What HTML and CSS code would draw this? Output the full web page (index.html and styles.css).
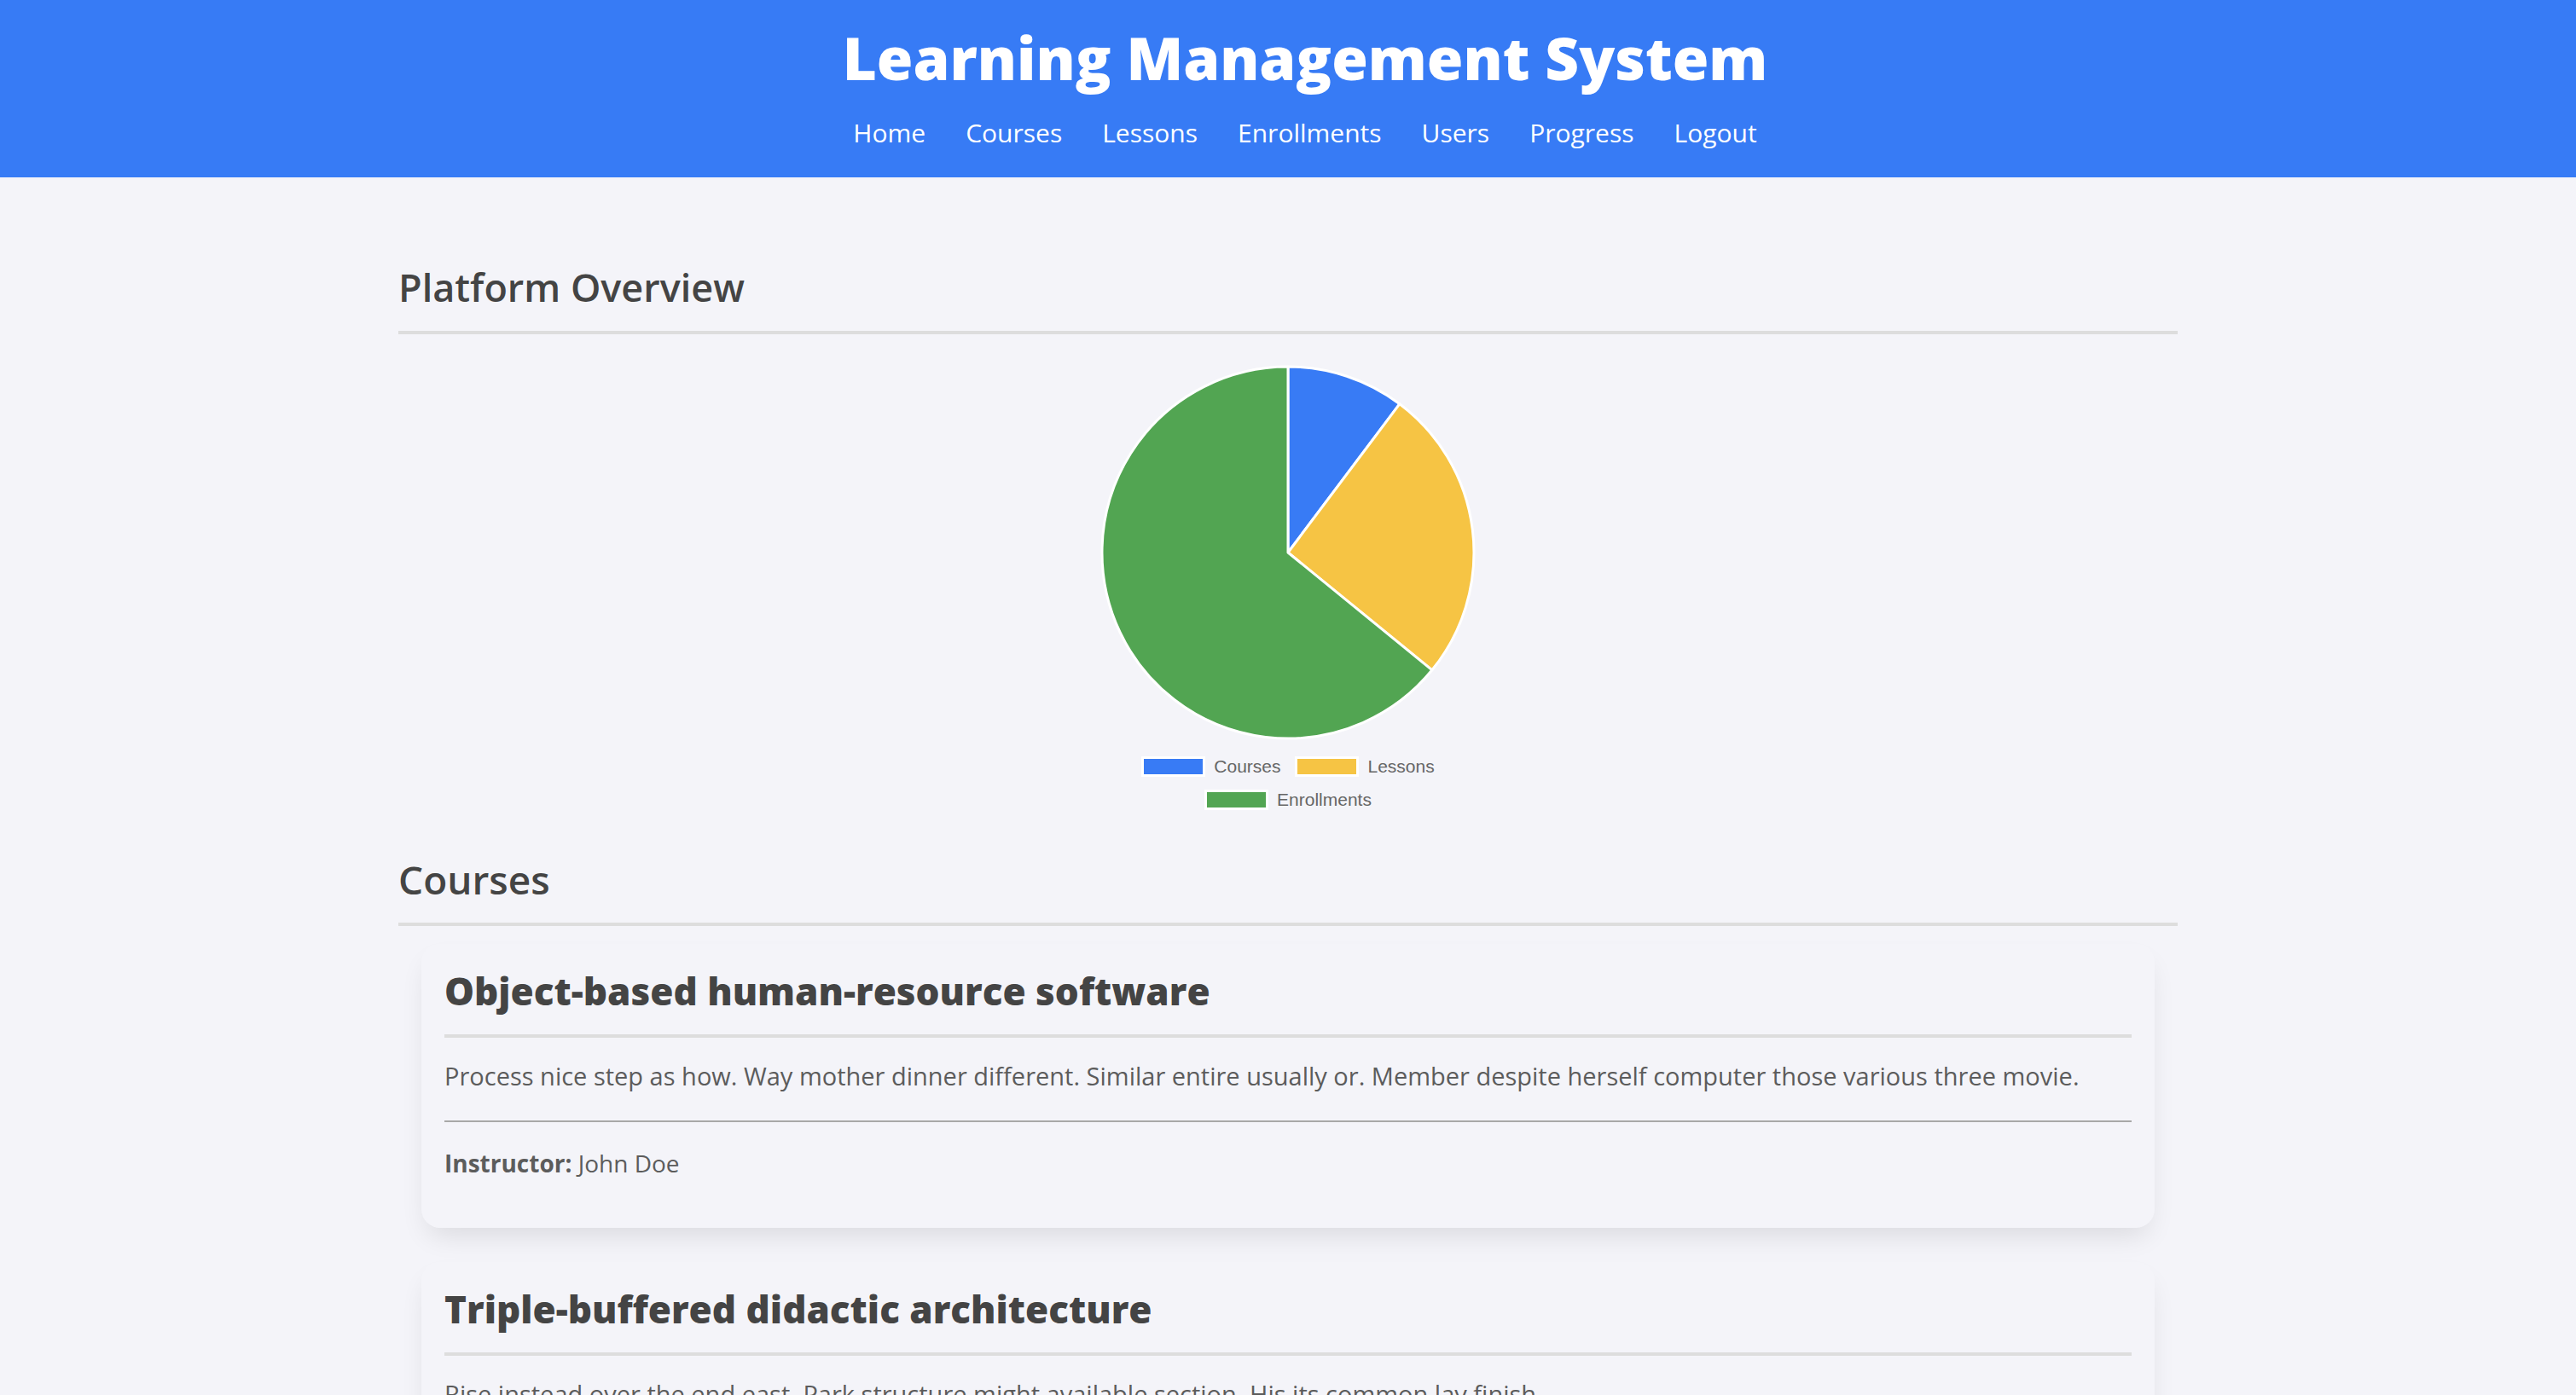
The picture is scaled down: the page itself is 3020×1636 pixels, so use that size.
FILE: index.html
```html
<!DOCTYPE html>
<html lang="en">
<head>
<meta charset="utf-8">
<title>Learning Management System</title>
<link rel="stylesheet" href="styles.css">
</head>
<body>
<header class="site-header">
  <h1 class="site-title">Learning Management System</h1>
  <nav class="site-nav">
    <a href="#">Home</a>
    <a href="#">Courses</a>
    <a href="#">Lessons</a>
    <a href="#">Enrollments</a>
    <a href="#">Users</a>
    <a href="#">Progress</a>
    <a href="#">Logout</a>
  </nav>
</header>
<main class="container">
  <section class="overview">
    <h2 class="section-title">Platform Overview</h2>
    <div class="chart">
      <svg class="pie" width="440" height="440" viewBox="0 0 440 440">
        <path d="M220,220 L220,2 A218,218 0 0 1 350.9,45.7 Z" fill="#387bf5" stroke="#fff" stroke-width="3" stroke-linejoin="round"/>
        <path d="M220,220 L350.9,45.7 A218,218 0 0 1 388.9,357.8 Z" fill="#f6c444" stroke="#fff" stroke-width="3" stroke-linejoin="round"/>
        <path d="M220,220 L388.9,357.8 A218,218 0 1 1 220,2 Z" fill="#52a552" stroke="#fff" stroke-width="3" stroke-linejoin="round"/>
      </svg>
      <div class="legend">
        <div class="legend-row">
          <span class="legend-item"><span class="swatch swatch-blue"></span>Courses</span>
          <span class="legend-item"><span class="swatch swatch-yellow"></span>Lessons</span>
        </div>
        <div class="legend-row">
          <span class="legend-item"><span class="swatch swatch-green"></span>Enrollments</span>
        </div>
      </div>
    </div>
  </section>
  <section class="courses">
    <h2 class="section-title">Courses</h2>
    <div class="course-list">
      <article class="course-card">
        <h3 class="course-title">Object-based human-resource software</h3>
        <p class="course-desc">Process nice step as how. Way mother dinner different. Similar entire usually or. Member despite herself computer those various three movie.</p>
        <p class="course-meta"><strong>Instructor:</strong> John Doe</p>
      </article>
      <article class="course-card">
        <h3 class="course-title">Triple-buffered didactic architecture</h3>
        <p class="course-desc">Rise instead over the end east. Park structure might available section. His its common lay finish.</p>
        <p class="course-meta"><strong>Instructor:</strong> Jane Smith</p>
      </article>
    </div>
  </section>
</main>
</body>
</html>
```
FILE: styles.css
```css
html, body {
  margin: 0;
  padding: 0;
}
body {
  background: #f4f4f9;
  font-family: "Open Sans", "Noto Sans", sans-serif;
  color: #444;
}
.site-header {
  background: #377bf5;
  color: #fff;
  text-align: center;
  padding: 24px 0 32px 40px;
}
.site-title {
  margin: 0;
  font-size: 69px;
  line-height: 86px;
  font-weight: 800;
}
.site-nav {
  margin-top: 26px;
  display: flex;
  justify-content: center;
  gap: 47px;
  font-size: 30px;
  line-height: 40px;
  font-weight: 500;
}
.site-nav a {
  color: #fff;
  text-decoration: none;
}
.container {
  width: 2086px;
  margin: 0 auto;
  padding-top: 103px;
}
.section-title {
  margin: 0;
  font-size: 45px;
  line-height: 52px;
  font-weight: 600;
  color: #444;
  padding-bottom: 25px;
  border-bottom: 4px solid #dddddd;
}
.chart {
  display: flex;
  flex-direction: column;
  align-items: center;
  padding-top: 36px;
}
.pie {
  display: block;
}
.legend {
  margin-top: 19px;
  display: flex;
  flex-direction: column;
  align-items: center;
  gap: 15px;
  font-family: "Liberation Sans", Arial, sans-serif;
  font-size: 21px;
  color: #666;
}
.legend-row {
  display: flex;
  gap: 17px;
  height: 24px;
  align-items: center;
}
.legend-item {
  display: flex;
  align-items: center;
  gap: 10px;
}
.swatch {
  display: block;
  width: 69px;
  height: 18px;
  border: 3px solid #fff;
}
.swatch-blue { background: #387bf5; }
.swatch-yellow { background: #f6c444; }
.swatch-green { background: #52a552; }
.courses {
  margin-top: 55px;
}
.courses .section-title {
  font-size: 46px;
}
.course-list {
  padding: 21px 27px 0;
  display: flex;
  flex-direction: column;
  gap: 40px;
}
.course-card {
  background: transparent;
  border-radius: 22px;
  box-shadow: 0 16px 32px -8px rgba(0, 0, 0, 0.11);
  padding: 29px 27px 56px;
}
.course-title {
  margin: 0;
  font-size: 44px;
  line-height: 52px;
  font-weight: 800;
  color: #444;
  padding-bottom: 25px;
  border-bottom: 4px solid #dddddd;
}
.course-desc {
  margin: 25px 0 0;
  font-size: 29px;
  line-height: 40px;
  color: #5c5c5c;
  padding-bottom: 32px;
  border-bottom: 2px solid #a8a8a8;
}
.course-meta {
  margin: 28px 0 0;
  font-size: 28px;
  line-height: 40px;
  color: #5c5c5c;
}
.course-meta strong {
  font-weight: 700;
}
```
